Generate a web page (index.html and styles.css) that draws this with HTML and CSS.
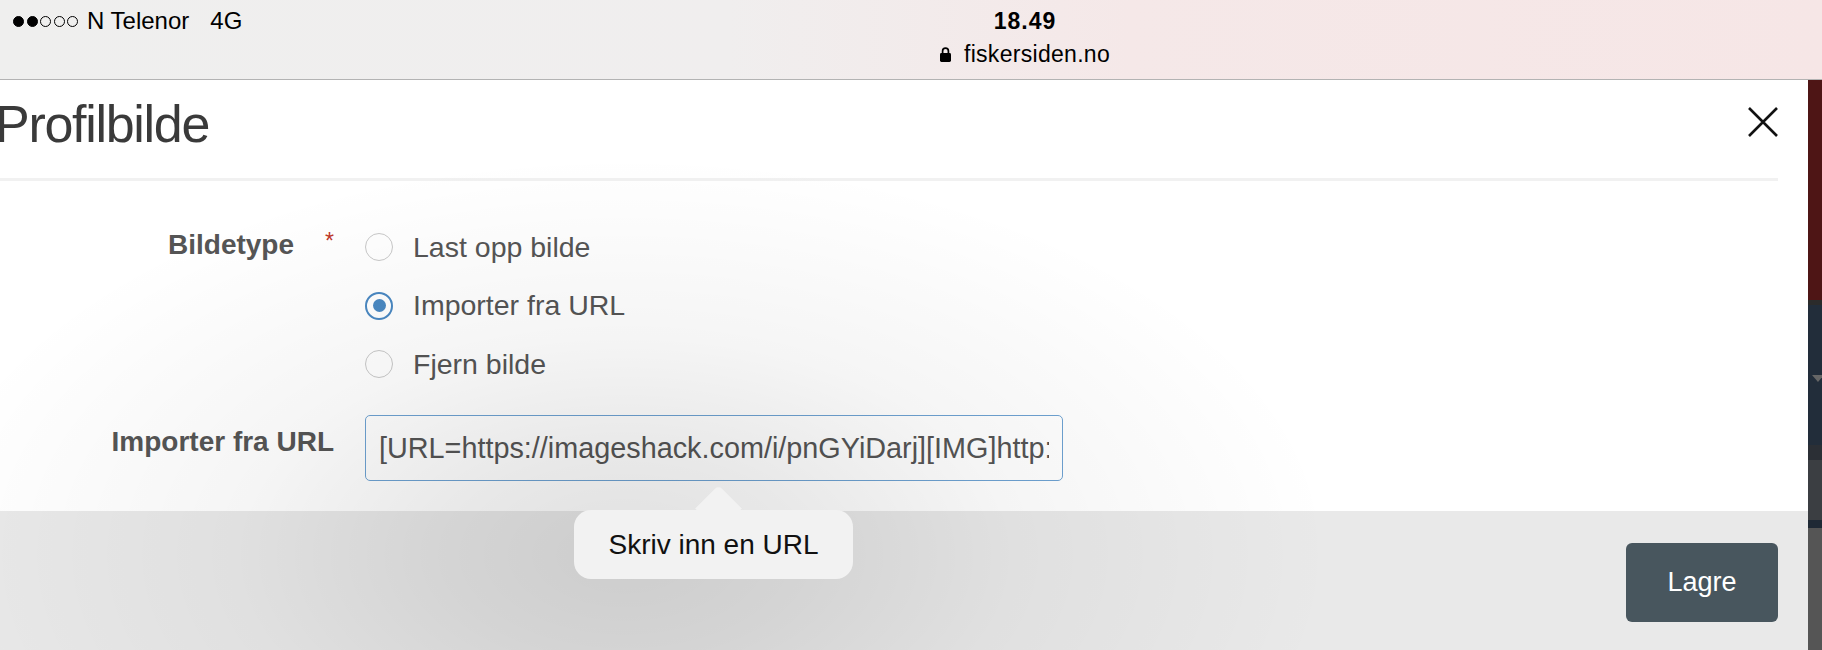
FILE: index.html
```html
<!DOCTYPE html>
<html lang="no">
<head>
    <meta charset="UTF-8">
    <meta name="viewport" content="width=device-width, initial-scale=1.0">
    <title>Profilbilde</title>
    <link rel="stylesheet" href="styles.css">
</head>
<body>
    <div class="statusbar">
        <div class="carrier">
            <span class="signal"><i class="on"></i><i class="on"></i><i></i><i></i><i></i></span>
            <span class="operator">N Telenor</span>
            <span class="network">4G</span>
        </div>
        <div class="clock">
            <div class="time">18.49</div>
            <div class="address">
                <svg class="lock" width="11" height="16" viewBox="0 0 11 16">
                    <path d="M2.6 7.5V5a2.9 2.9 0 0 1 5.8 0v2.5" fill="none" stroke="#000" stroke-width="1.7"/>
                    <rect x="0" y="7" width="11" height="9" rx="1.4" fill="#000"/>
                </svg>
                <span>fiskersiden.no</span>
            </div>
        </div>
    </div>

    <div class="stage">
        <div class="modal">
            <div class="modal-header">
                <h1>Profilbilde</h1>
                <button class="close" type="button" aria-label="Lukk">
                    <svg width="30" height="30" viewBox="0 0 30 30">
                        <path d="M1 1L29 29M29 1L1 29" stroke="#111" stroke-width="2.6" fill="none"/>
                    </svg>
                </button>
            </div>

            <form class="modal-body">
                <div class="field">
                    <div class="field-label field-label-top">Bildetype<span class="required">*</span></div>
                    <div class="options">
                        <label class="option"><input type="radio" name="bildetype"> Last opp bilde</label>
                        <label class="option"><input type="radio" name="bildetype" checked> Importer fra URL</label>
                        <label class="option"><input type="radio" name="bildetype"> Fjern bilde</label>
                    </div>
                </div>
                <div class="field">
                    <div class="field-label">Importer fra URL</div>
                    <div class="url-wrap">
                        <input class="url-input" type="text" value="[URL=https://imageshack.com/i/pnGYiDarj][IMG]http://imagizer.imageshack.com/img922/pnGYiDarj.jpg[/IMG][/URL]">
                        <div class="glow"></div>
                        <div class="tooltip">Skriv inn en URL</div>
                    </div>
                </div>
            </form>

            <div class="modal-footer">
                <button class="save" type="button">Lagre</button>
            </div>
        </div>

        <div class="backdrop">
            <div class="bd-red"></div>
            <div class="bd-dark"></div>
            <div class="bd-navy"><span class="caret"></span></div>
            <div class="bd-slate"></div>
            <div class="bd-grey"></div>
            <div class="bd-navy2"></div>
            <div class="bd-rest"></div>
        </div>
    </div>
</body>
</html>
```

FILE: styles.css
```css
:root {
    --text: #555555;
    --accent: #4a88c2;
    --footer: #e9e9e9;
    --save: #48565e;
}

* {
    box-sizing: border-box;
}

body {
    margin: 0;
    width: 1822px;
    height: 650px;
    overflow: hidden;
    background: #ffffff;
    font-family: "Liberation Sans", Arial, sans-serif;
    color: #000;
}

/* top bar */
.statusbar {
    display: grid;
    grid-template-columns: 925px 200px 1fr;
    height: 80px;
    border-bottom: 1px solid #b3b3b3;
    background: linear-gradient(90deg, #efefee 0%, #f0eeee 40%, #f5e8e8 62%, #f6e6e6 100%);
}

.carrier {
    display: flex;
    align-items: center;
    height: 28px;
    margin-top: 7px;
    padding-left: 13px;
    font-size: 24px;
}

.signal {
    display: flex;
    gap: 2.5px;
    margin-right: 9px;
}

.signal i {
    width: 11px;
    height: 11px;
    border-radius: 50%;
    border: 1px solid #000;
}

.signal i.on {
    background: #000;
}

.network {
    margin-left: 21px;
}

.clock {
    display: flex;
    flex-direction: column;
    align-items: center;
    padding-top: 8px;
}

.time {
    font-size: 23px;
    font-weight: bold;
    line-height: 26px;
    letter-spacing: 1px;
}

.address {
    display: flex;
    align-items: center;
    gap: 13px;
    margin-top: 6px;
    font-size: 23px;
    line-height: 28px;
    letter-spacing: 0.3px;
    white-space: nowrap;
}

.lock {
    margin-top: -1px;
}

/* modal */
.stage {
    display: flex;
    height: 570px;
    overflow: hidden;
}

.modal {
    flex: 1;
    display: flex;
    flex-direction: column;
    background: #ffffff;
    overflow: hidden;
}

.modal-header {
    display: flex;
    justify-content: space-between;
    align-items: flex-start;
    height: 101px;
    flex-shrink: 0;
    margin-right: 30px;
    border-bottom: 3px solid #f1f1f1;
}

.modal-header h1 {
    margin: 14px 0 0 -5px;
    font-size: 52px;
    line-height: 60px;
    font-weight: normal;
    letter-spacing: -1.3px;
    color: #3a3a3a;
}

.close {
    margin-top: 27px;
    padding: 0;
    border: none;
    background: none;
    line-height: 0;
}

.modal-body {
    padding: 37px 0 30px;
}

.field {
    display: flex;
    gap: 31px;
}

.field + .field {
    margin-top: 21.5px;
}

.field-label {
    width: 334px;
    text-align: right;
    font-size: 28px;
    font-weight: bold;
    line-height: 54px;
    color: var(--text);
}

.field-label-top {
    line-height: 46px;
}

.required {
    margin-left: 31px;
    font-size: 23px;
    font-weight: normal;
    color: #c0392b;
    vertical-align: 5px;
}

.options {
    display: flex;
    flex-direction: column;
}

.option {
    display: flex;
    align-items: center;
    gap: 20px;
    height: 58.5px;
    font-size: 28.5px;
    color: var(--text);
}

.option input {
    appearance: none;
    -webkit-appearance: none;
    margin: 0;
    width: 28px;
    height: 28px;
    border-radius: 50%;
    border: 1.5px solid #c8c8c8;
    background: #fff;
    display: grid;
    place-items: center;
}

.option input:checked {
    border: 2.5px solid var(--accent);
}

.option input:checked::after {
    content: "";
    width: 13px;
    height: 13px;
    border-radius: 50%;
    background: var(--accent);
}

.url-wrap {
    position: relative;
}

.url-input {
    width: 698px;
    height: 66px;
    padding: 0 13px;
    border: 1.5px solid #6ea2d2;
    border-radius: 5px;
    background: #fff;
    font-family: inherit;
    font-size: 28.8px;
    color: var(--text);
    outline: none;
}

/* soft shade that the hint throws on the page */
.glow {
    position: absolute;
    left: -450px;
    top: -260px;
    width: 1420px;
    height: 800px;
    background: radial-gradient(ellipse 50% 50% at 50% 50%, rgba(0, 0, 0, 0.12) 0%, rgba(0, 0, 0, 0.09) 25%, rgba(0, 0, 0, 0.04) 55%, rgba(0, 0, 0, 0) 100%);
    pointer-events: none;
    z-index: 1;
}

/* iOS style hint under the input */
.tooltip {
    position: absolute;
    left: 209px;
    top: 95px;
    width: 279px;
    height: 69px;
    display: flex;
    align-items: center;
    justify-content: center;
    border-radius: 17px;
    background: #f2f2f2;
    font-size: 28px;
    color: #111;
    z-index: 2;
}

.tooltip::before {
    content: "";
    position: absolute;
    left: 127.5px;
    top: -18px;
    width: 33px;
    height: 33px;
    background: #f2f2f2;
    border-top-left-radius: 5px;
    transform: rotate(45deg);
}

.modal-footer {
    flex: 1;
    display: flex;
    justify-content: flex-end;
    align-items: flex-start;
    padding: 32px 30px 0 0;
    background: var(--footer);
}

.save {
    width: 152px;
    height: 79px;
    border: none;
    border-radius: 6px;
    background: var(--save);
    color: #fff;
    font-family: inherit;
    font-size: 27px;
}

/* page behind the modal */
.backdrop {
    width: 14px;
    display: flex;
    flex-direction: column;
}

.bd-red { height: 220px; background: #4e1515; }
.bd-dark { height: 5px; background: #2b2b2b; }
.bd-navy { height: 140px; background: #222d3a; padding: 70px 0 0 4px; }
.bd-slate { height: 15px; background: #2b2f35; }
.bd-grey { height: 60px; background: #3b3e42; }
.bd-navy2 { height: 8px; background: #1f2935; }
.bd-rest { flex: 1; background: #555; }

.caret {
    display: block;
    width: 0;
    height: 0;
    border-left: 6px solid transparent;
    border-right: 6px solid transparent;
    border-top: 7px solid #666;
}
```
